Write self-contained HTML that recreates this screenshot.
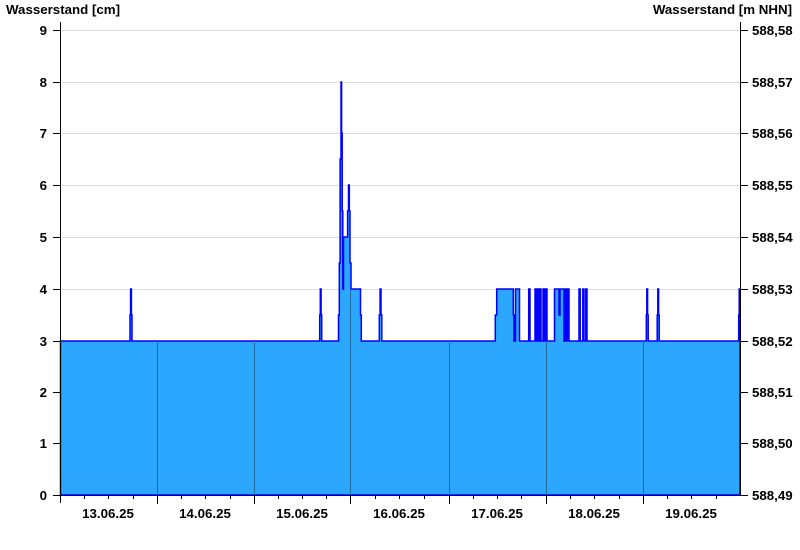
<!DOCTYPE html>
<html><head><meta charset="utf-8"><style>
html,body{margin:0;padding:0;background:#fff;width:800px;height:550px;overflow:hidden}
svg text{font-family:"Liberation Sans",Arial,sans-serif;font-weight:bold;font-size:13.3px;fill:#000}
</style></head><body>
<svg width="800" height="550" viewBox="0 0 800 550" xmlns="http://www.w3.org/2000/svg">
<rect width="800" height="550" fill="#fff"/>
<g stroke="#dcdcdc" stroke-width="1">
<line x1="61" x2="740" y1="30.5" y2="30.5"/>
<line x1="61" x2="740" y1="82.5" y2="82.5"/>
<line x1="61" x2="740" y1="133.5" y2="133.5"/>
<line x1="61" x2="740" y1="185.5" y2="185.5"/>
<line x1="61" x2="740" y1="237.5" y2="237.5"/>
<line x1="61" x2="740" y1="289.5" y2="289.5"/>
</g>
<path fill="#2ba7ff" stroke="#0000ff" stroke-width="1.5" stroke-linejoin="miter" d="M60.5,495 V341 H130 V315 H130.6 V289 H131.4 V315 H132 V341 H319.7 V315 H320.3 V289 H321.1 V315 H321.7 V341 H338.5 V315 H339.3 V263 H340.1 V159 H341 V82 H341.6 V133 H342.2 V211 H342.8 V289 H343.5 V237 H347.6 V211 H348.5 V185 H349.3 V211 H350 V263 H351 V289 H360.5 V315 H361.3 V341 H379.3 V315 H380.1 V289 H381 V315 H381.8 V341 H495.3 V315 H496.7 V289 H513.3 V315 H514 V341 H515.5 V289 H519.5 V341 H528.7 V289 H530 V341 H535 V289 H536 V341 H537.3 V289 H538.5 V341 H539.7 V289 H541 V341 H543 V289 H544.5 V341 H545.5 V289 H547 V341 H554.5 V289 H559 V315 H560 V289 H564 V341 H565 V289 H566.5 V341 H567.5 V289 H569 V341 H579 V289 H580.2 V341 H582.8 V289 H584 V341 H585.8 V289 H587 V341 H646.3 V315 H646.8 V289 H647.6 V315 H648.2 V341 H657.2 V315 H657.8 V289 H658.6 V315 H659.2 V341 H738.7 V315 H739.2 V289 H740 V495 Z"/>
<g stroke="#1f6aa0" stroke-width="1">
<line x1="157.5" x2="157.5" y1="341" y2="495"/>
<line x1="254.5" x2="254.5" y1="341" y2="495"/>
<line x1="350.5" x2="350.5" y1="289" y2="495"/>
<line x1="449.5" x2="449.5" y1="341" y2="495"/>
<line x1="546.5" x2="546.5" y1="341" y2="495"/>
<line x1="643.5" x2="643.5" y1="341" y2="495"/>
</g>
<g stroke="#000" stroke-width="1">
<line x1="60.5" x2="60.5" y1="22" y2="503"/>
<line x1="60" x2="741" y1="495.5" y2="495.5"/>
<line x1="740.5" x2="740.5" y1="22" y2="496"/>
<line x1="53" x2="60" y1="30.5" y2="30.5"/><line x1="53" x2="60" y1="82.5" y2="82.5"/>
<line x1="53" x2="60" y1="133.5" y2="133.5"/><line x1="53" x2="60" y1="185.5" y2="185.5"/>
<line x1="53" x2="60" y1="237.5" y2="237.5"/><line x1="53" x2="60" y1="289.5" y2="289.5"/>
<line x1="53" x2="60" y1="341.5" y2="341.5"/><line x1="53" x2="60" y1="392.5" y2="392.5"/>
<line x1="53" x2="60" y1="443.5" y2="443.5"/><line x1="53" x2="60" y1="495.5" y2="495.5"/>
<line x1="741" x2="748" y1="30.5" y2="30.5"/><line x1="741" x2="748" y1="82.5" y2="82.5"/>
<line x1="741" x2="748" y1="133.5" y2="133.5"/><line x1="741" x2="748" y1="185.5" y2="185.5"/>
<line x1="741" x2="748" y1="237.5" y2="237.5"/><line x1="741" x2="748" y1="289.5" y2="289.5"/>
<line x1="741" x2="748" y1="341.5" y2="341.5"/><line x1="741" x2="748" y1="392.5" y2="392.5"/>
<line x1="741" x2="748" y1="443.5" y2="443.5"/><line x1="741" x2="748" y1="495.5" y2="495.5"/>
<line x1="157.5" x2="157.5" y1="496" y2="504"/><line x1="254.5" x2="254.5" y1="496" y2="504"/>
<line x1="350.5" x2="350.5" y1="496" y2="504"/><line x1="449.5" x2="449.5" y1="496" y2="504"/>
<line x1="546.5" x2="546.5" y1="496" y2="504"/><line x1="643.5" x2="643.5" y1="496" y2="504"/>
<line x1="84.5" x2="84.5" y1="496" y2="499"/><line x1="108.5" x2="108.5" y1="496" y2="499"/><line x1="133.5" x2="133.5" y1="496" y2="499"/>
<line x1="181.5" x2="181.5" y1="496" y2="499"/><line x1="205.5" x2="205.5" y1="496" y2="499"/><line x1="230.5" x2="230.5" y1="496" y2="499"/>
<line x1="278.5" x2="278.5" y1="496" y2="499"/><line x1="302.5" x2="302.5" y1="496" y2="499"/><line x1="326.5" x2="326.5" y1="496" y2="499"/>
<line x1="375.5" x2="375.5" y1="496" y2="499"/><line x1="399.5" x2="399.5" y1="496" y2="499"/><line x1="424.5" x2="424.5" y1="496" y2="499"/>
<line x1="473.5" x2="473.5" y1="496" y2="499"/><line x1="497.5" x2="497.5" y1="496" y2="499"/><line x1="521.5" x2="521.5" y1="496" y2="499"/>
<line x1="570.5" x2="570.5" y1="496" y2="499"/><line x1="594.5" x2="594.5" y1="496" y2="499"/><line x1="619.5" x2="619.5" y1="496" y2="499"/>
<line x1="667.5" x2="667.5" y1="496" y2="499"/><line x1="691.5" x2="691.5" y1="496" y2="499"/><line x1="716.5" x2="716.5" y1="496" y2="499"/>
</g>
<text x="6" y="14">Wasserstand [cm]</text>
<text x="792" y="14" text-anchor="end">Wasserstand [m NHN]</text>
<g text-anchor="end">
<text x="47" y="35">9</text><text x="47" y="87">8</text><text x="47" y="138">7</text>
<text x="47" y="190">6</text><text x="47" y="242">5</text><text x="47" y="294">4</text>
<text x="47" y="346">3</text><text x="47" y="397">2</text><text x="47" y="448">1</text><text x="47" y="500">0</text>
</g>
<g>
<text x="752" y="35">588,58</text><text x="752" y="87">588,57</text><text x="752" y="138">588,56</text>
<text x="752" y="190">588,55</text><text x="752" y="242">588,54</text><text x="752" y="294">588,53</text>
<text x="752" y="346">588,52</text><text x="752" y="397">588,51</text><text x="752" y="448">588,50</text><text x="752" y="500">588,49</text>
</g>
<g text-anchor="middle">
<text x="108" y="518">13.06.25</text><text x="205" y="518">14.06.25</text><text x="302" y="518">15.06.25</text>
<text x="399" y="518">16.06.25</text><text x="497" y="518">17.06.25</text><text x="594" y="518">18.06.25</text>
<text x="691" y="518">19.06.25</text>
</g>
</svg>
</body></html>
